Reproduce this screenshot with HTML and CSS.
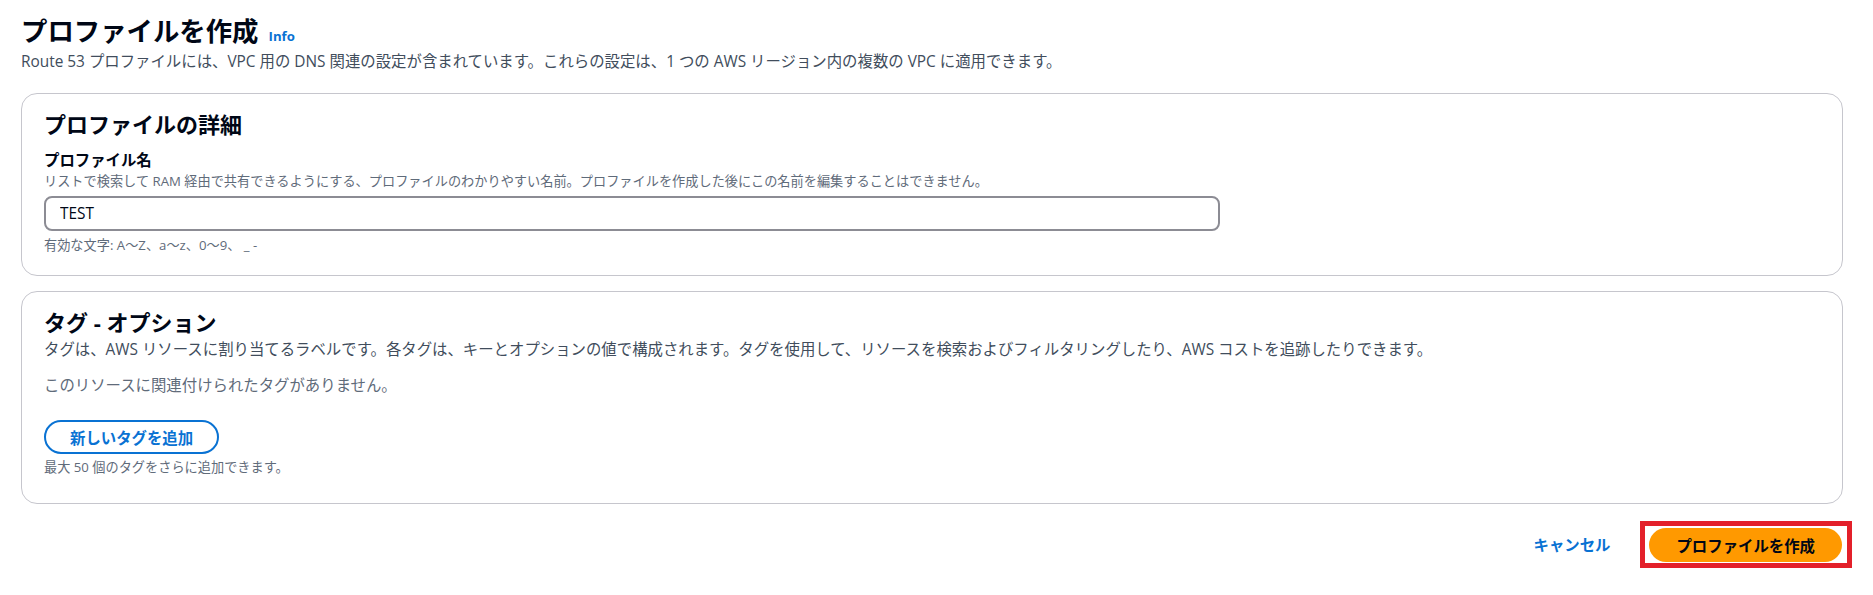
FILE: index.html
```html
<!DOCTYPE html>
<html lang="ja">
<head>
  <meta charset="UTF-8" />
  <title>プロファイルを作成</title>
  <link rel="stylesheet" href="styles.css">
</head>
<body>
  <div class="page">
    <h1 class="title">プロファイルを作成<a class="info" href="#">Info</a></h1>
    <p class="lead">Route 53 プロファイルには、VPC 用の DNS 関連の設定が含まれています。これらの設定は、1 つの AWS リージョン内の複数の VPC に適用できます。</p>

    <div class="card">
      <h2>プロファイルの詳細</h2>
      <label for="profileName">プロファイル名</label>
      <div class="field-desc">リストで検索して RAM 経由で共有できるようにする、プロファイルのわかりやすい名前。プロファイルを作成した後にこの名前を編集することはできません。</div>
      <input type="text" id="profileName" value="TEST" />
      <div class="hint">有効な文字: A〜Z、a〜z、0〜9、 _ -</div>
    </div>

    <div class="card tags-card">
      <h2>タグ - オプション</h2>
      <p class="card-desc">タグは、AWS リソースに割り当てるラベルです。各タグは、キーとオプションの値で構成されます。タグを使用して、リソースを検索およびフィルタリングしたり、AWS コストを追跡したりできます。</p>
      <p class="empty">このリソースに関連付けられたタグがありません。</p>
      <button class="btn-normal">新しいタグを追加</button>
      <div class="hint">最大 50 個のタグをさらに追加できます。</div>
    </div>

    <div class="actions">
      <a class="cancel" href="#">キャンセル</a>
      <span class="highlight"><button class="btn-primary">プロファイルを作成</button></span>
    </div>
  </div>
</body>
</html>
```

FILE: styles.css
```css
body {
  margin: 0;
  background: #fff;
  color: #000716;
  font-family: "Open Sans", "Noto Sans CJK JP", sans-serif;
}
.page {
  padding: 0 21px 0 21px;
}
.title {
  margin: 14px 0 0;
  font-size: 26.4px;
  line-height: 34px;
  font-weight: 700;
}
.info {
  margin-left: 10px;
  font-size: 13.2px;
  line-height: 1;
  font-weight: 700;
  color: #0972d3;
  text-decoration: none;
}
.lead {
  margin: 3px 0 0;
  font-size: 15.4px;
  line-height: 22px;
  color: #414d5c;
}
.card {
  margin-top: 20px;
  margin-right: 9px;
  border: 1px solid #c6c6cd;
  border-radius: 16px;
  padding: 16px 22px 21px;
}
.card + .card {
  margin-top: 15px;
}
.tags-card {
  padding-bottom: 27px;
}
h2 {
  margin: 0;
  font-size: 22px;
  line-height: 28px;
  font-weight: 700;
}
label {
  display: block;
  margin-top: 13px;
  font-size: 15.4px;
  line-height: 20px;
  font-weight: 700;
}
.field-desc {
  margin-top: 1px;
  font-size: 13.2px;
  line-height: 18px;
  color: #5f6b7a;
}
input {
  display: block;
  box-sizing: border-box;
  width: 66.2%;
  height: 35px;
  margin-top: 6px;
  padding: 0 14px;
  border: 2px solid #8c8c94;
  border-radius: 8px;
  font-family: inherit;
  font-size: 15.4px;
  color: #000716;
}
.hint {
  margin-top: 5px;
  font-size: 13.2px;
  line-height: 18px;
  color: #5f6b7a;
}
.card-desc {
  margin: 3px 0 0;
  font-size: 15.4px;
  line-height: 22px;
  color: #414d5c;
}
.empty {
  margin: 14px 0 0;
  font-size: 15.4px;
  line-height: 22px;
  color: #5f6b7a;
}
.btn-normal {
  display: block;
  height: 34px;
  margin-top: 23px;
  padding: 0 24px;
  background: #fff;
  border: 2px solid #0972d3;
  border-radius: 20px;
  color: #0972d3;
  font-family: inherit;
  font-size: 15.4px;
  font-weight: 700;
}
.tags-card .hint {
  margin-top: 4px;
}
.actions {
  display: flex;
  justify-content: flex-end;
  align-items: center;
  gap: 30px;
  margin-top: 17px;
}
.cancel {
  font-size: 15.4px;
  font-weight: 700;
  color: #0972d3;
  text-decoration: none;
}
/* red annotation frame round the submit button */
.highlight {
  display: flex;
  padding: 2px 5px 1px 4px;
  border: 5px solid #e3202a;
}
.btn-primary {
  height: 34px;
  padding: 0 27px;
  background: #ff9900;
  border: none;
  border-radius: 20px;
  color: #000716;
  font-family: inherit;
  font-size: 15.4px;
  font-weight: 700;
}
```
